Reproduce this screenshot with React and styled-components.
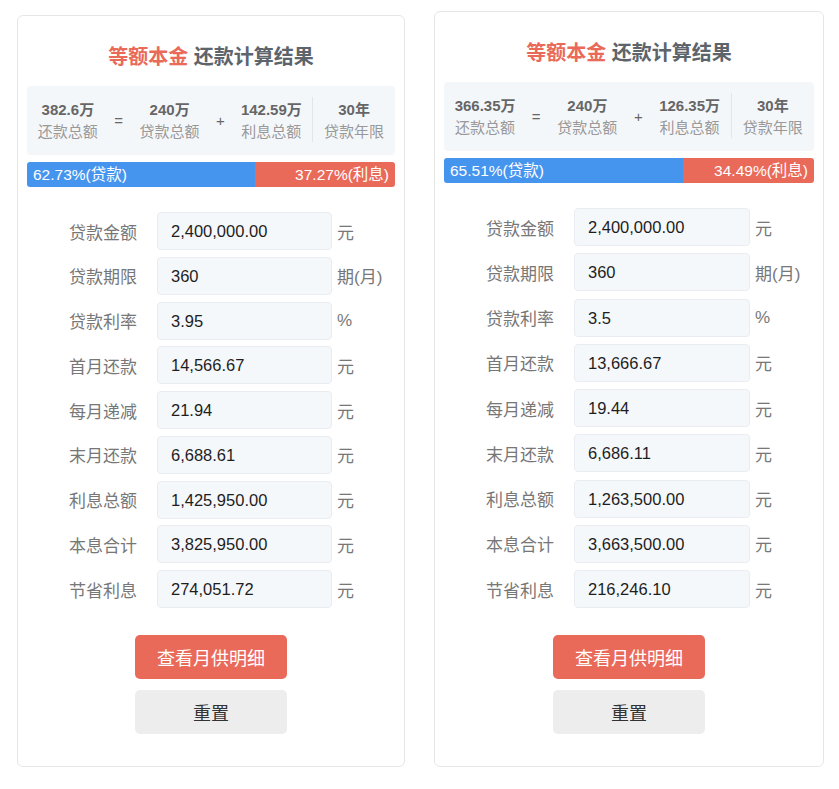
import React from 'react';
import styled, { createGlobalStyle } from 'styled-components';

const GlobalStyle = createGlobalStyle`
  body {
    margin: 0;
    background: #fff;
    font-family: "Liberation Sans", "Noto Sans CJK SC", sans-serif;
  }
`;

const Page = styled.div`
  display: flex;
  align-items: flex-start;
  gap: 29px;
  padding-left: 17px;
`;

const Card = styled.div`
  box-sizing: border-box;
  width: ${p => p.$width}px;
  margin-top: ${p => p.$top}px;
  border: 1px solid #e6e6e6;
  border-radius: 6px;
  padding: 27px 9px 32px;
  background: #fff;
`;

const Title = styled.h2`
  margin: 0;
  text-align: center;
  font-size: 20px;
  line-height: 28px;
  font-weight: bold;
  color: #5d646b;
  span {
    color: #ea6a5a;
  }
`;

const Summary = styled.div`
  display: flex;
  align-items: center;
  margin-top: 15px;
  height: 69px;
  background: #f4f7fa;
  border-radius: 4px;
`;

const SumItem = styled.div`
  flex: 1;
  display: flex;
  flex-direction: column;
  align-items: center;
  font-size: 15px;
  line-height: 22px;
  b {
    color: #666;
  }
  span {
    color: #999;
  }
`;

const Sign = styled.div`
  width: 20px;
  text-align: center;
  color: #666;
  font-size: 15px;
`;

const Divider = styled.div`
  width: 1px;
  align-self: stretch;
  margin: 11px 0 13px;
  background: #e3e6e9;
`;

const Bar = styled.div`
  display: flex;
  margin-top: 7px;
  height: 25px;
  border-radius: 3px;
  overflow: hidden;
  font-size: 15.5px;
  line-height: 25px;
  color: #fff;
`;

const BarPart = styled.div`
  background: ${p => (p.$kind === 'loan' ? '#4595ef' : '#ea6a5a')};
  text-align: ${p => (p.$kind === 'loan' ? 'left' : 'right')};
  padding: 0 6px;
  white-space: nowrap;
`;

const Rows = styled.div`
  display: flex;
  flex-direction: column;
  gap: ${p => p.$gap}px;
  margin-top: 25px;
  padding-left: 42px;
`;

const Row = styled.div`
  display: flex;
  align-items: center;
  height: 38px;
`;

const Label = styled.div`
  width: 68px;
  margin-right: 20px;
  font-size: 17px;
  color: #777;
  white-space: nowrap;
`;

const Field = styled.div`
  box-sizing: border-box;
  width: ${p => p.$width}px;
  height: 38px;
  padding: 1px 0 0 13px;
  display: flex;
  align-items: center;
  background: #f5f8fb;
  border: 1px solid #e9edf1;
  border-radius: 4px;
  font-size: 16.5px;
  color: #1e1e1e;
`;

const Unit = styled.div`
  margin-left: 5px;
  font-size: 17px;
  color: #777;
`;

const Buttons = styled.div`
  display: flex;
  flex-direction: column;
  align-items: center;
  gap: 11px;
  margin-top: 27px;
`;

const Button = styled.button`
  width: 152px;
  height: 44px;
  border: none;
  border-radius: 5px;
  font-family: inherit;
  font-size: 18px;
  cursor: pointer;
  background: ${p => (p.$primary ? '#ea6a5a' : '#ededed')};
  color: ${p => (p.$primary ? '#fff' : '#333')};
`;

const cards = [
  {
    width: 388, top: 15, gap: 6.75, field: 175,
    total: '382.6万', loan: '240万', interest: '142.59万', years: '30年',
    loanPct: 62.73, intPct: 37.27,
    rows: [
      ['贷款金额', '2,400,000.00', '元'],
      ['贷款期限', '360', '期(月)'],
      ['贷款利率', '3.95', '%'],
      ['首月还款', '14,566.67', '元'],
      ['每月递减', '21.94', '元'],
      ['末月还款', '6,688.61', '元'],
      ['利息总额', '1,425,950.00', '元'],
      ['本息合计', '3,825,950.00', '元'],
      ['节省利息', '274,051.72', '元'],
    ],
  },
  {
    width: 390, top: 11, gap: 7.25, field: 176,
    total: '366.35万', loan: '240万', interest: '126.35万', years: '30年',
    loanPct: 65.51, intPct: 34.49,
    rows: [
      ['贷款金额', '2,400,000.00', '元'],
      ['贷款期限', '360', '期(月)'],
      ['贷款利率', '3.5', '%'],
      ['首月还款', '13,666.67', '元'],
      ['每月递减', '19.44', '元'],
      ['末月还款', '6,686.11', '元'],
      ['利息总额', '1,263,500.00', '元'],
      ['本息合计', '3,663,500.00', '元'],
      ['节省利息', '216,246.10', '元'],
    ],
  },
];

const ResultCard = ({ c }) => (
  <Card $width={c.width} $top={c.top}>
    <Title><span>等额本金</span> 还款计算结果</Title>
    <Summary>
      <SumItem><b>{c.total}</b><span>还款总额</span></SumItem>
      <Sign>=</Sign>
      <SumItem><b>{c.loan}</b><span>贷款总额</span></SumItem>
      <Sign>+</Sign>
      <SumItem><b>{c.interest}</b><span>利息总额</span></SumItem>
      <Divider />
      <SumItem><b>{c.years}</b><span>贷款年限</span></SumItem>
    </Summary>
    <Bar>
      <BarPart $kind="loan" style={{ width: c.loanPct + '%' }}>{c.loanPct}%(贷款)</BarPart>
      <BarPart $kind="interest" style={{ width: c.intPct + '%' }}>{c.intPct}%(利息)</BarPart>
    </Bar>
    <Rows $gap={c.gap}>
      {c.rows.map(([label, value, unit]) => (
        <Row key={label}>
          <Label>{label}</Label>
          <Field $width={c.field}>{value}</Field>
          <Unit>{unit}</Unit>
        </Row>
      ))}
    </Rows>
    <Buttons>
      <Button $primary>查看月供明细</Button>
      <Button>重置</Button>
    </Buttons>
  </Card>
);

export default function App() {
  return (
    <>
      <GlobalStyle />
      <Page>
        {cards.map((c, i) => <ResultCard key={i} c={c} />)}
      </Page>
    </>
  );
}
